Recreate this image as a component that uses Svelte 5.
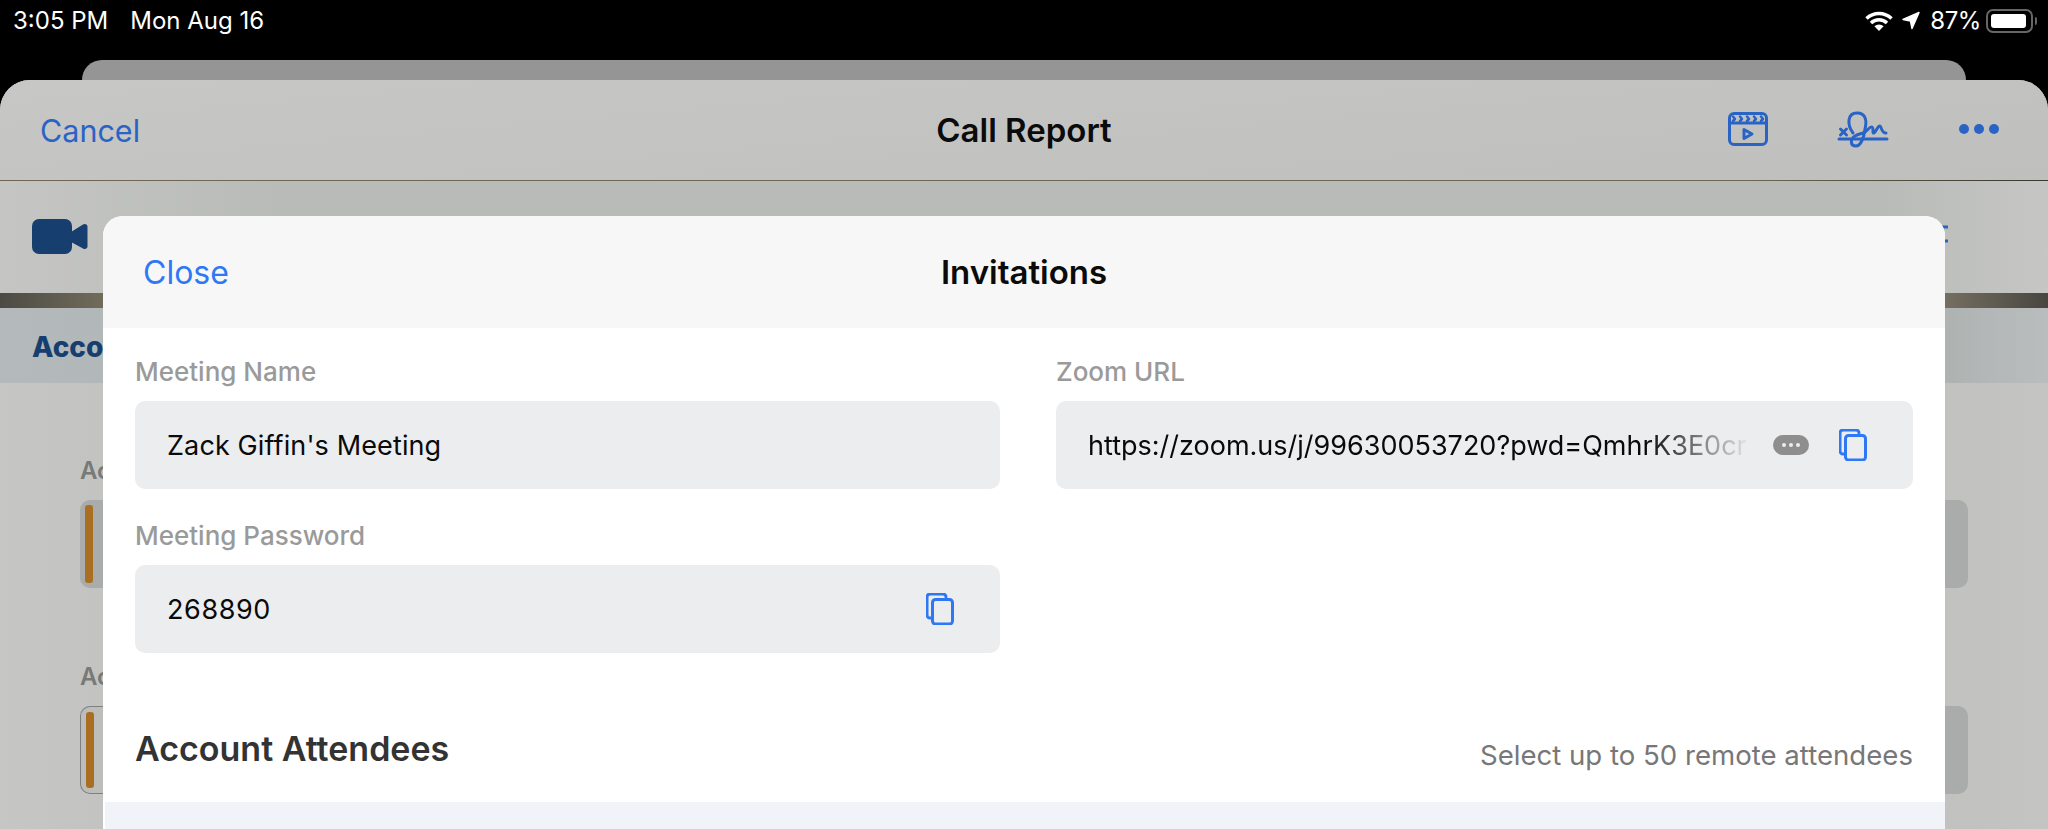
<script>
  const fields = ['first', 'second'];
</script>

<div class="screen">
  <header class="status">
    <div class="status-left"><span>3:05 PM</span><span>Mon Aug 16</span></div>
    <div class="status-right">
      <svg class="wifi" viewBox="0 0 28 20" aria-hidden="true">
        <path class="arc" d="M1.500 7.500A18 18 0 0 1 26.500 7.500"/>
        <path class="arc" d="M6 12A11.500 11.500 0 0 1 22 12"/>
        <path d="M14 20 9.400 15.300A6.500 6.500 0 0 1 18.600 15.300z"/>
      </svg>
      <svg class="arrow" viewBox="0 0 18 18" aria-hidden="true"><path d="M17 1 10 17 8.500 9.500 1 8z"/></svg>
      <span class="pct">87%</span>
      <div class="battery"><div class="level"></div></div>
      <div class="nub"></div>
    </div>
  </header>

  <div class="back-sheet"></div>

  <main class="sheet">
    <section class="nav">
      <a class="cancel">Cancel</a>
      <h1>Call Report</h1>
      <div class="nav-icons">
        <svg class="film" viewBox="0 0 40 34" aria-hidden="true">
          <rect x="1.500" y="1.500" width="37" height="31" rx="4.500"/>
          <path d="M1.500 11h37"/>
          <path class="thin" d="M5 4.500 7 7 5 9M12 4.500 14 7 12 9M19 4.500 21 7 19 9M26 4.500 28 7 26 9M33 4.500 35 7 33 9"/>
          <path d="M16 17.500v9l8-4.500z"/>
        </svg>
        <svg class="sign" viewBox="0 0 48 36" aria-hidden="true">
          <path d="M0 28h48"/>
          <path d="M1.500 18l6 6M7.500 18l-6 6"/>
          <path d="M14 22C8 14 8 2 18 2c9 0 10 8 8 16-1 8-4 17-9 17-6 0-6-7-1-10 4-2.500 7-2 10-4"/>
          <path d="M26 21c3-2 5-6 7-5 2 1 0 7 2 6 2-1 4-8 6-7 2 1 1 7 6 7"/>
        </svg>
        <svg class="dots" viewBox="0 0 40 10" aria-hidden="true"><circle cx="5" cy="5" r="5"/><circle cx="20" cy="5" r="5"/><circle cx="35" cy="5" r="5"/></svg>
      </div>
    </section>

    <section class="toolbar">
      <svg class="camera" viewBox="0 0 56 36" aria-hidden="true">
        <rect x="0" y="0" width="40" height="35" rx="7"/>
        <path d="M39 13 51 5.500c2-1.200 4.500-.2 4.500 2v20c0 2.200-2.500 3.200-4.500 2L39 23z"/>
      </svg>
      <svg class="list" viewBox="0 0 28 26" aria-hidden="true"><path d="M0 8h28M0 22h28"/></svg>
    </section>

    <div class="strip"></div>
    <div class="tabs"><span>Account</span></div>

    <section class="form-bg">
      {#each fields as f}
        <div class="bg-field {f}">
          <div class="bg-label">Account</div>
          <div class="bg-box"><div class="bar"></div></div>
        </div>
      {/each}
    </section>
  </main>

  <aside class="modal">
    <header class="modal-head">
      <a class="close">Close</a>
      <h2>Invitations</h2>
      <span></span>
    </header>
    <div class="grid">
      <div class="col">
        <label>Meeting Name</label>
        <div class="input"><span class="val">Zack Giffin's Meeting</span></div>
        <label class="second">Meeting Password</label>
        <div class="input">
          <span class="val digits">268890</span>
          <svg class="copy pw" viewBox="0 0 28 32" aria-hidden="true">
            <path d="M5 25H4a3 3 0 0 1-3-3V4a3 3 0 0 1 3-3h13a3 3 0 0 1 3 3"/>
            <rect x="6.500" y="6.500" width="20" height="24.500" rx="3"/>
          </svg>
        </div>
      </div>
      <div class="col">
        <label>Zoom URL</label>
        <div class="input">
          <span class="url">https://zoom.us/j/99630053720?pwd=QmhrK3E0cr</span>
          <div class="more"><i></i><i></i><i></i></div>
          <svg class="copy" viewBox="0 0 28 32" aria-hidden="true">
            <path d="M5 25H4a3 3 0 0 1-3-3V4a3 3 0 0 1 3-3h13a3 3 0 0 1 3 3"/>
            <rect x="6.500" y="6.500" width="20" height="24.500" rx="3"/>
          </svg>
        </div>
      </div>
    </div>
    <div class="attendees">
      <h3>Account Attendees</h3>
      <span>Select up to 50 remote attendees</span>
    </div>
    <div class="list-head"></div>
  </aside>
</div>

<style>
  :global(body) { margin: 0; background: #000; }
  .screen {
    position: relative;
    width: 2048px;
    height: 829px;
    overflow: hidden;
    background: #000;
    font-family: Inter, "Noto Sans", sans-serif;
  }
  .status {
    height: 60px;
    box-sizing: border-box;
    padding: 0 11px 0 13px;
    display: flex;
    justify-content: space-between;
    align-items: flex-start;
    color: #fff;
    font-size: 24px;
  }
  .status-left { display: flex; gap: 22px; padding-top: 6px; line-height: 29px; }
  .status-right { display: flex; align-items: center; height: 41px; }
  .wifi { width: 28px; height: 20px; fill: #fff; margin-right: 9px; overflow: visible; }
  .wifi .arc { fill: none; stroke: #fff; stroke-width: 3.500; }
  .arrow { width: 18px; height: 19px; fill: #fff; stroke: #fff; stroke-width: 1.500; stroke-linejoin: round; margin-right: 10px; }
  .pct { margin-right: 5px; letter-spacing: -.4px; }
  .battery {
    width: 47px; height: 24px; box-sizing: border-box;
    border: 2px solid #666; border-radius: 7px; padding: 3px;
  }
  .level { width: 35px; height: 14px; background: #fff; border-radius: 3px; }
  .nub { width: 2px; height: 8px; background: #666; margin-left: 2px; border-radius: 0 2px 2px 0; }
  .back-sheet {
    height: 20px;
    margin: 0 82px;
    border-radius: 24px 24px 0 0;
    background: #959595;
  }
  .sheet {
    height: 749px;
    border-radius: 30px 30px 0 0;
    background: linear-gradient(90deg, #c6c6c4, #bebfbd 12%, #bdbebb 88%, #c4c5c2);
    overflow: hidden;
  }
  .nav {
    height: 101px;
    box-sizing: border-box;
    border-bottom: 1px solid;
    border-image: linear-gradient(90deg, #6f6751 85%, #38382f) 1;
    padding: 0 40px;
    display: grid;
    grid-template-columns: 1fr auto 1fr;
    align-items: center;
    background: linear-gradient(175deg, #c7c7c6, #bfc0bd);
  }
  .cancel { color: #2a63c6; font-size: 30.500px; }
  h1 { margin: 0; font-size: 33px; font-weight: 600; color: #0b0b0b; }
  .nav-icons { display: flex; align-items: center; justify-content: flex-end; padding: 0 9px 3px 0; }
  .film { width: 40px; height: 34px; margin-right: 71px; }
  .film, .sign { fill: none; stroke: #2a63c6; stroke-width: 3; stroke-linejoin: round; stroke-linecap: round; overflow: visible; }
  .film .thin { stroke-width: 2.500; }
  .sign { width: 48px; height: 36px; margin-right: 72px; stroke-width: 3; }
  .dots { width: 40px; height: 10px; fill: #2a63c6; }
  .toolbar {
    height: 112px;
    box-sizing: border-box;
    padding: 38px 100px 0 32px;
    display: flex;
    justify-content: space-between;
    align-items: flex-start;
    background: linear-gradient(90deg, #c5c6c3, #b9bbb8 14%, #b9bbb8 92%, #c6c7c4);
  }
  .camera { width: 56px; height: 36px; fill: #163e6e; }
  .list { width: 28px; height: 26px; stroke: #2a63c6; stroke-width: 3; fill: none; }
  .strip { height: 15px; background: linear-gradient(90deg, #4c4a44, #716b5a 5%, #756e60 95%, #484640); }
  .tabs {
    height: 75px;
    box-sizing: border-box;
    padding: 3px 0 0 32px;
    display: flex;
    align-items: center;
    background: linear-gradient(90deg, #b4b9bb, #aeb3b4 15%, #aeb3b2 95%, #b9bdbe);
    color: #163e6e;
    font-size: 28px;
    font-weight: 800;
  }
  .form-bg { padding: 0 80px; }
  .bg-field { height: 133px; padding-top: 72px; }
  .bg-field + .bg-field { padding-top: 73px; }
  .bg-label { height: 45px; color: #777a77; font-size: 24px; font-weight: 600; line-height: 32px; }
  .bg-box {
    height: 88px;
    box-sizing: border-box;
    padding: 5px;
    border-radius: 10px;
    background: #a9acaa;
  }
  .bg-field.second .bg-box {
    border: 1px solid transparent;
    background:
      linear-gradient(90deg, #bdbebb 50%, #a9acaa 50%) padding-box,
      linear-gradient(90deg, #7d807e 50%, #a9acaa 50%) border-box;
  }
  .bar { width: 8px; height: 100%; border-radius: 3px; background: #a96e22; }

  .modal {
    position: absolute;
    left: 103px;
    top: 216px;
    width: 1842px;
    height: 700px;
    border-radius: 20px 20px 0 0;
    background: #fff;
    overflow: hidden;
  }
  .modal-head {
    height: 112px;
    padding: 0 40px;
    display: grid;
    grid-template-columns: 1fr auto 1fr;
    align-items: center;
    background: #f7f7f7;
  }
  .close { color: #2f78f5; font-size: 32px; }
  h2 { margin: 0; font-size: 33px; font-weight: 600; color: #0b0b0b; }
  .grid {
    display: grid;
    grid-template-columns: 865px 857px;
    column-gap: 56px;
    padding: 0 32px;
  }
  label {
    display: block;
    height: 73px;
    box-sizing: border-box;
    padding-top: 28px;
    color: #9a9a9a;
    font-size: 26px;
    font-weight: 500;
    line-height: 32px;
  }
  label.second { height: 76px; padding-top: 31px; }
  .input {
    height: 88px;
    box-sizing: border-box;
    padding: 0 33px 0 32px;
    display: flex;
    align-items: center;
    border-radius: 10px;
    background: #ecedef;
    color: #0a0a0a;
    font-size: 27px;
  }
  .val { flex: 1; letter-spacing: .12px; }
  .val.digits { letter-spacing: .6px; }
  .url {
    width: 664px;
    white-space: nowrap;
    overflow: hidden;
    -webkit-mask-image: linear-gradient(90deg, #000 84%, transparent 100%);
    mask-image: linear-gradient(90deg, #000 84%, transparent 100%);
  }
  .more {
    width: 36px; height: 20px;
    margin: 0 30px 0 21px;
    flex: none;
    border-radius: 10px;
    background: #8e8e8f;
    display: flex; align-items: center; justify-content: center; gap: 3px;
  }
  .more i { width: 4px; height: 4px; border-radius: 50%; background: #ecedef; }
  .copy {
    flex: none; width: 28px; height: 32px;
    fill: none; stroke: #2f78f5; stroke-width: 3; stroke-linecap: round;
  }
  .copy.pw { margin-right: 13px; }
  .attendees {
    display: flex;
    justify-content: space-between;
    align-items: flex-start;
    height: 115px;
    box-sizing: border-box;
    padding: 75px 32px 0;
  }
  h3 { margin: 0; font-size: 34px; font-weight: 600; color: #333; }
  .attendees span { margin-top: 10px; color: #777; font-size: 27.600px; }
  .list-head { margin: 34px 0 0 2px; height: 120px; background: #f0f4f8; }
</style>
